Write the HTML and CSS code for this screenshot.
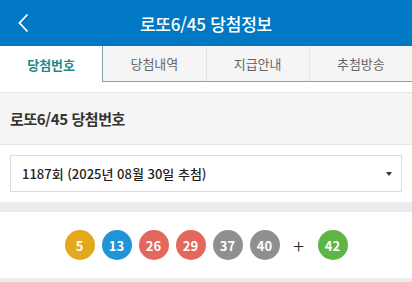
FILE: index.html
```html
<!DOCTYPE html>
<html lang="ko">
<head>
<meta charset="utf-8">
<link rel="stylesheet" href="styles.css">
</head>
<body>
<header class="topbar">
  <a class="back" href="#"><svg width="12" height="20" viewBox="0 0 12 20"><path d="M10.5 1.5 L2.5 10 L10.5 18.5" fill="none" stroke="#fff" stroke-width="1.8"/></svg></a>
  <h1 class="title">로또6/45 당첨정보</h1>
  <span></span>
</header>
<nav class="tabs">
  <a class="tab active" href="#">당첨번호</a>
  <a class="tab" href="#">당첨내역</a>
  <a class="tab" href="#">지급안내</a>
  <a class="tab" href="#">추첨방송</a>
</nav>
<section class="section-head">
  <h2>로또6/45 당첨번호</h2>
</section>
<div class="select-wrap">
  <div class="select">
    <span>1187회 (2025년 08월 30일 추첨)</span>
    <svg width="6" height="4" viewBox="0 0 6 4"><path d="M0 0 H6 L3 4 Z" fill="#333"/></svg>
  </div>
</div>
<div class="band"></div>
<div class="balls">
  <span class="ball y">5</span>
  <span class="ball b">13</span>
  <span class="ball r">26</span>
  <span class="ball r">29</span>
  <span class="ball g">37</span>
  <span class="ball g">40</span>
  <span class="plus">+</span>
  <span class="ball gr">42</span>
</div>
<div class="band"></div>
</body>
</html>
```
FILE: styles.css
```css
* { box-sizing: border-box; }
html, body { margin: 0; padding: 0; }
body {
  font-family: "Noto Sans CJK KR", "Noto Sans", sans-serif;
  background: #fff;
  color: #333;
  width: 412px;
}
.topbar {
  height: 46px;
  background: #0078c3;
  display: grid;
  grid-template-columns: 46px 1fr 46px;
  align-items: center;
}
.back {
  display: flex;
  justify-content: center;
  height: 20px;
}
.title {
  margin: 0;
  text-align: center;
  color: #fff;
  font-size: 17px;
  font-weight: 500;
  letter-spacing: -0.2px;
}
.tabs {
  display: flex;
  height: 36px;
}
.tab {
  flex: 1;
  display: flex;
  align-items: center;
  justify-content: center;
  background: #f5f5f5;
  color: #666;
  font-size: 13px;
  text-decoration: none;
  border-bottom: 1px solid #7aa9ab;
  border-left: 1px solid #e4e4e4;
}
.tab:first-child { border-left: none; }
.tab.active {
  background: #fff;
  color: #1e8a8c;
  font-weight: 700;
  border-bottom: none;
}
.tab.active + .tab { border-left: 1px solid #7aa9ab; }
.section-head {
  margin-top: 10px;
  background: #f5f5f5;
  border-top: 1px solid #e6e6e6;
  border-bottom: 1px solid #e6e6e6;
  height: 53px;
  display: flex;
  align-items: center;
  padding: 0 10px;
}
.section-head h2 {
  margin: 0;
  font-size: 15px;
  font-weight: 700;
  letter-spacing: -0.4px;
  color: #333;
}
.select-wrap {
  padding: 10px;
}
.select {
  height: 37px;
  border: 1px solid #dcdcdc;
  display: flex;
  align-items: center;
  justify-content: space-between;
  padding: 0 9px 0 11px;
  font-size: 13px;
  font-weight: 500;
  color: #222;
}
.band {
  height: 10px;
  background: #e9eded;
}
.balls {
  height: 66px;
  display: flex;
  align-items: center;
  justify-content: center;
  gap: 7px;
}
.ball {
  width: 30px;
  height: 30px;
  border-radius: 50%;
  display: flex;
  align-items: center;
  justify-content: center;
  color: #fff;
  font-size: 13px;
  font-weight: 700;
}
.ball.y { background: #e4a81d; }
.ball.b { background: #1f94d8; }
.ball.r { background: #e4675b; }
.ball.g { background: #8f8f8f; }
.ball.gr { background: #5db545; }
.plus {
  width: 24px;
  text-align: center;
  font-size: 20px;
  font-weight: 300;
  color: #222;
}
```
